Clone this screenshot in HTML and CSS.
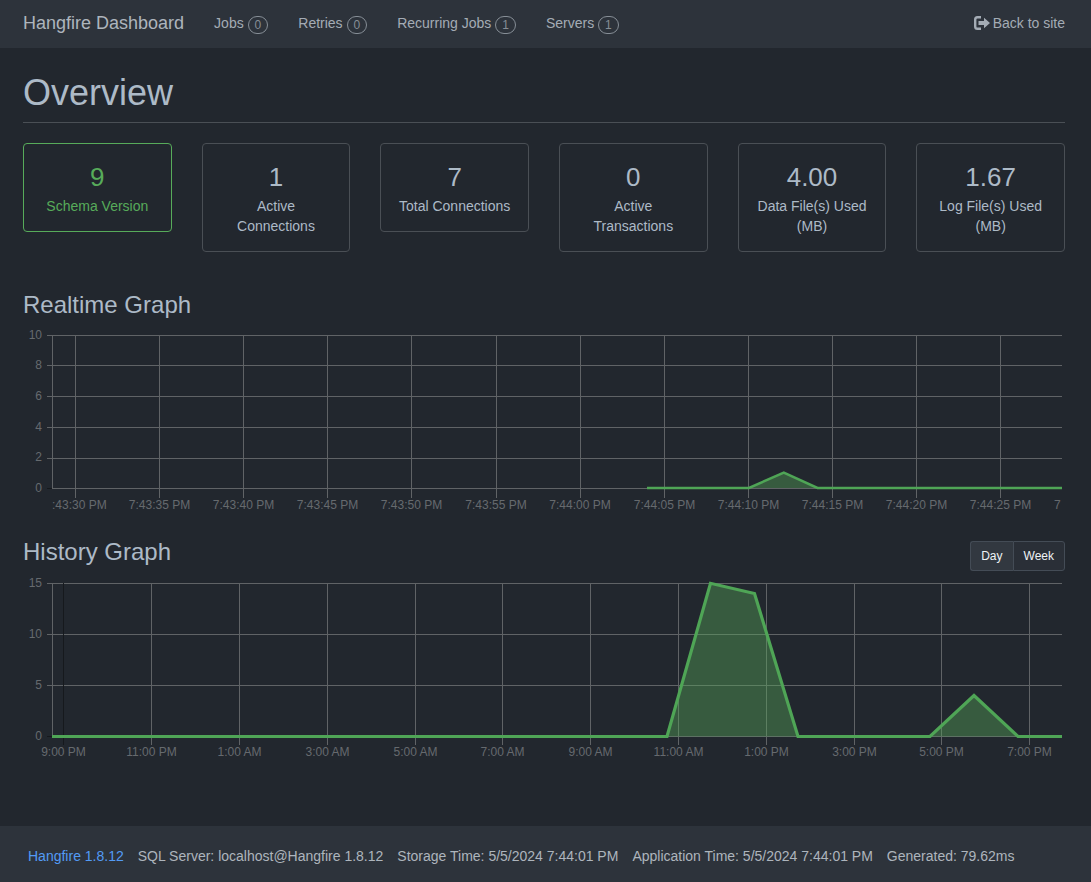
FILE: index.html
```html
<!DOCTYPE html>
<html lang="en">

<head>
    <meta charset="utf-8">
    <title>Overview – Hangfire Dashboard</title>
    <link rel="stylesheet" href="styles.css">
</head>

<body>
    <nav class="navbar">
        <a class="brand" href="#">Hangfire Dashboard</a>
        <ul class="nav-links">
            <li><a href="#">Jobs <span class="badge">0</span></a></li>
            <li><a href="#">Retries <span class="badge">0</span></a></li>
            <li><a href="#">Recurring Jobs <span class="badge">1</span></a></li>
            <li><a href="#">Servers <span class="badge">1</span></a></li>
        </ul>
        <a class="back-link" href="#">
            <svg class="back-icon" viewBox="0 0 16 14" width="16" height="14">
                <path d="M7 0H3.5Q0 0 0 3.5v7Q0 14 3.5 14H7v-2.4H3.6q-1.2 0-1.2-1.2V3.6q0-1.2 1.2-1.2H7z"/>
                <path d="M4.5 5H10V1.8L16 7l-6 5.2V9H4.5z"/>
            </svg>
            Back to site
        </a>
    </nav>

    <main class="content">
        <h1 class="page-title">Overview</h1>

        <div class="metrics">
            <div class="metric metric-success">
                <div class="metric-value">9</div>
                <div class="metric-label">Schema Version</div>
            </div>
            <div class="metric">
                <div class="metric-value">1</div>
                <div class="metric-label">Active Connections</div>
            </div>
            <div class="metric">
                <div class="metric-value">7</div>
                <div class="metric-label">Total Connections</div>
            </div>
            <div class="metric">
                <div class="metric-value">0</div>
                <div class="metric-label">Active Transactions</div>
            </div>
            <div class="metric">
                <div class="metric-value">4.00</div>
                <div class="metric-label">Data File(s) Used (MB)</div>
            </div>
            <div class="metric">
                <div class="metric-value">1.67</div>
                <div class="metric-label">Log File(s) Used (MB)</div>
            </div>
        </div>

        <h2 class="graph-title realtime-title">Realtime Graph</h2>
        <!-- viewBox uses page coordinates, so the numbers read straight off the screen -->
        <svg class="graph realtime-graph" viewBox="23 325 1042 190" width="1042" height="190">
            <path class="grid" d="M47 335.5H1062M47 365.5H1062M47 396.5H1062M47 427.5H1062M47 458.5H1062M52 488.5H1062"/>
            <path class="grid" d="M52.5 335V488M75.5 335V498M159.5 335V498M243.5 335V498M327.5 335V498M411.5 335V498M496.5 335V498M580.5 335V498M664.5 335V498M748.5 335V498M832.5 335V498M916.5 335V498M1000.5 335V498"/>
            <path class="grid-zero" d="M47 488.5H52"/>
            <path class="area" d="M749 488L783.8 472.5L817.5 488Z"/>
            <path class="line line-thin" d="M647 488H749L783.8 472.5L817.5 488H1062"/>
            <g class="y-labels">
                <text x="42" y="339">10</text>
                <text x="42" y="369">8</text>
                <text x="42" y="400">6</text>
                <text x="42" y="431">4</text>
                <text x="42" y="461">2</text>
                <text x="42" y="492">0</text>
            </g>
            <g class="x-labels">
                <text class="label-start" x="52" y="509">:43:30 PM</text>
                <text x="159.5" y="509">7:43:35 PM</text>
                <text x="243.5" y="509">7:43:40 PM</text>
                <text x="327.5" y="509">7:43:45 PM</text>
                <text x="411.5" y="509">7:43:50 PM</text>
                <text x="496" y="509">7:43:55 PM</text>
                <text x="580" y="509">7:44:00 PM</text>
                <text x="664.5" y="509">7:44:05 PM</text>
                <text x="748.5" y="509">7:44:10 PM</text>
                <text x="832.5" y="509">7:44:15 PM</text>
                <text x="916.5" y="509">7:44:20 PM</text>
                <text x="1000.5" y="509">7:44:25 PM</text>
                <text class="label-start" x="1054" y="509">7</text>
            </g>
        </svg>

        <div class="graph-head">
            <h2 class="graph-title">History Graph</h2>
            <div class="btn-group">
                <button class="btn btn-active" type="button">Day</button>
                <button class="btn" type="button">Week</button>
            </div>
        </div>
        <svg class="graph history-graph" viewBox="23 573 1042 190" width="1042" height="190">
            <path class="grid" d="M47 583.5H1062M47 634.5H1062M47 685.5H1062M52 736.5H1062"/>
            <path class="grid" d="M52.5 583V736M151.5 583V745M239.5 583V745M327.5 583V745M415.5 583V745M502.5 583V745M590.5 583V745M678.5 583V745M766.5 583V745M854.5 583V745M941.5 583V745M1029.5 583V745"/>
            <path class="grid-zero" d="M63.5 583V745M47 736.5H52"/>
            <path class="area" d="M667 736.5L710.5 583.3L754.5 593.5L798 736.5Z"/>
            <path class="area" d="M930 736.5L974 695.5L1018 736.5Z"/>
            <path class="line" d="M52 736.5H667L710.5 583.3L754.5 593.5L798 736.5H930L974 695.5L1018 736.5H1062"/>
            <g class="y-labels">
                <text x="42" y="587">15</text>
                <text x="42" y="638">10</text>
                <text x="42" y="689">5</text>
                <text x="42" y="740">0</text>
            </g>
            <g class="x-labels">
                <text x="63.5" y="756">9:00 PM</text>
                <text x="151.5" y="756">11:00 PM</text>
                <text x="239.5" y="756">1:00 AM</text>
                <text x="327.5" y="756">3:00 AM</text>
                <text x="415.5" y="756">5:00 AM</text>
                <text x="502.5" y="756">7:00 AM</text>
                <text x="590.5" y="756">9:00 AM</text>
                <text x="678.5" y="756">11:00 AM</text>
                <text x="766.5" y="756">1:00 PM</text>
                <text x="854.5" y="756">3:00 PM</text>
                <text x="941.5" y="756">5:00 PM</text>
                <text x="1029.5" y="756">7:00 PM</text>
            </g>
        </svg>
    </main>

    <footer class="footer">
        <a href="#">Hangfire 1.8.12</a>
        <span>SQL Server: localhost@Hangfire 1.8.12</span>
        <span>Storage Time: 5/5/2024 7:44:01 PM</span>
        <span>Application Time: 5/5/2024 7:44:01 PM</span>
        <span>Generated: 79.62ms</span>
    </footer>
</body>

</html>
```

FILE: styles.css
```css
* { box-sizing: border-box; }
html, body { height: 100%; }
body { margin: 0; display: flex; flex-direction: column; background: #22272e; color: #adbac7; font: 14px/20px "Liberation Sans", Arial, sans-serif; overflow: hidden; }
a { color: inherit; text-decoration: none; }

/* top bar */
.navbar { display: flex; align-items: center; height: 48px; flex: none; padding: 0 26px 2px 23px; background: #2d333b; color: #a4acb5; }
.brand { font-size: 18px; margin-right: 15px; color: #adb5bd; }
.nav-links { display: flex; list-style: none; margin: 0; padding: 0; }
.nav-links a { display: block; padding: 0 15px; }
.badge { display: inline-block; min-width: 20px; height: 18px; padding: 0 6px; border: 1px solid #868e96; border-radius: 10px; font-size: 12px; line-height: 16px; text-align: center; vertical-align: -1px; color: #868e96; }
.back-link { display: flex; align-items: center; gap: 3px; margin-left: auto; }
.back-icon { fill: #a4acb5; }

/* page */
.content { flex: 1; padding: 0 26px 0 23px; }
.page-title { margin: 25px 0 20px; padding-bottom: 9px; border-bottom: 1px solid #4a4f55; font-size: 36px; font-weight: 400; line-height: 40px; }

.metrics { display: grid; grid-template-columns: repeat(6, 1fr); gap: 30px; align-items: start; }
.metric { padding: 15px; border: 1px solid #4a4f55; border-radius: 4px; text-align: center; }
.metric-value { font-size: 26px; line-height: 36px; margin-bottom: 1px; }
.metric-success { border-color: #57ab5a; color: #57ab5a; }

/* graphs */
.graph-title { margin: 0; font-size: 24px; font-weight: 400; line-height: 26px; }
.realtime-title { margin-top: 40px; }
.graph { display: block; }
.realtime-graph { margin-top: 7px; }
.history-graph { margin-top: 2px; }
.graph-head { display: flex; justify-content: space-between; margin-top: 24px; }
.btn-group { display: flex; margin-top: 2px; }
.btn { height: 30px; padding: 0 10px; border: 1px solid #444c56; background: #2a2f37; color: #eef2f5; font: 12px "Liberation Sans", Arial, sans-serif; }
.btn:first-child { border-radius: 3px 0 0 3px; border-right: 0; }
.btn:last-child { border-radius: 0 3px 3px 0; }
.btn-active { background: #323840; }

.grid { fill: none; stroke: #606366; stroke-width: 1; }
.grid-zero { fill: none; stroke: #16191d; stroke-width: 1; }
.area { fill: rgba(87, 171, 90, .4); }
.line { fill: none; stroke: #4fa556; stroke-width: 3.2; }
.line-thin { stroke-width: 2.5; }
.y-labels text { font-size: 12px; fill: #666a6e; text-anchor: end; }
.x-labels text { font-size: 12px; fill: #666a6e; text-anchor: middle; }
.x-labels .label-start { text-anchor: start; }

/* bottom bar */
.footer { display: flex; align-items: center; gap: 14px; height: 56px; flex: none; padding: 4px 28px 0; background: #2d333b; color: #adb5bd; }
.footer a { color: #539bf5; }
```
